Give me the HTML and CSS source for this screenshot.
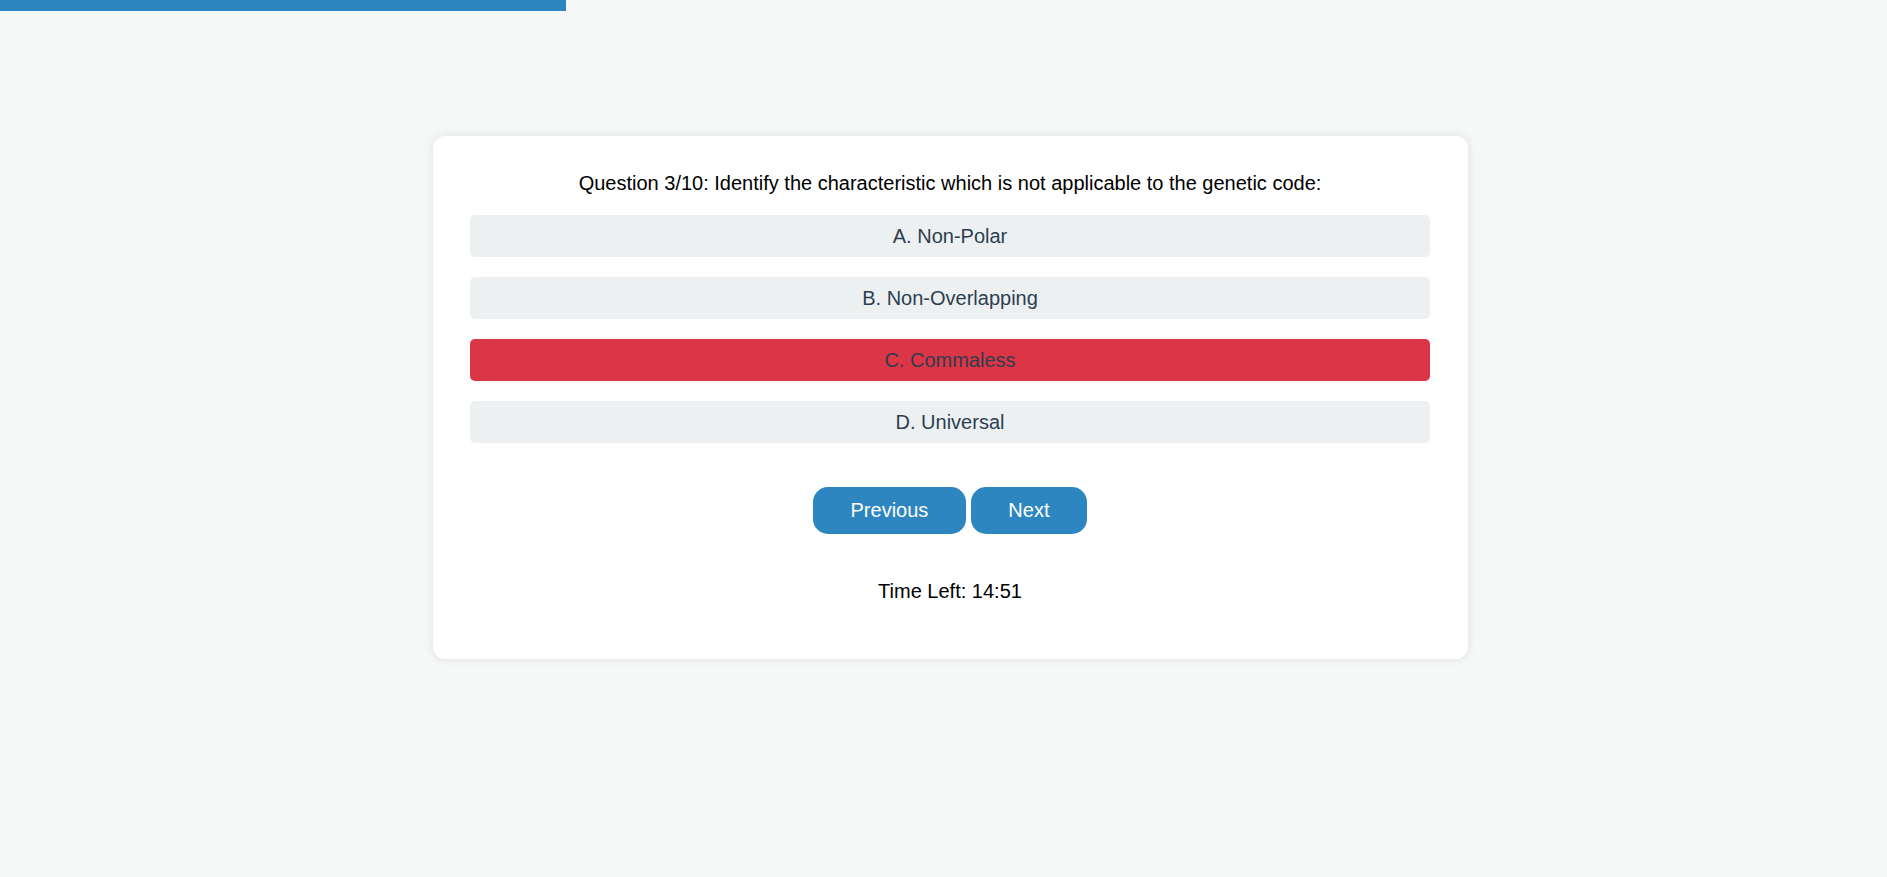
FILE: index.html
```html
<!DOCTYPE html>
<html lang="en">
<head>
<meta charset="utf-8">
<title>Quiz</title>
<link rel="stylesheet" href="styles.css">
</head>
<body>
  <div class="progress"><div class="progress-fill" style="width: 30%"></div></div>
  <main class="page">
    <section class="card">
      <h2 class="question">Question 3/10: Identify the characteristic which is not applicable to the genetic code:</h2>
      <div class="options">
        <button class="option">A. Non-Polar</button>
        <button class="option">B. Non-Overlapping</button>
        <button class="option option-wrong">C. Commaless</button>
        <button class="option">D. Universal</button>
      </div>
      <div class="nav">
        <button class="nav-btn">Previous</button>
        <button class="nav-btn">Next</button>
      </div>
      <p class="timer">Time Left: 14:51</p>
    </section>
  </main>
</body>
</html>
```

FILE: styles.css
```css
* {
  box-sizing: border-box;
}

html, body {
  margin: 0;
  padding: 0;
}

body {
  background: #f6f8f8;
  font-family: "Liberation Sans", Arial, sans-serif;
  min-height: 877px;
}

.progress {
  height: 11px;
  width: 100%;
}

.progress-fill {
  height: 100%;
  background: #2e86c1;
}

.page {
  display: flex;
  justify-content: center;
  padding-left: 14px;
  padding-top: 125px;
}

.card {
  width: 1035px;
  background: #ffffff;
  border-radius: 12px;
  box-shadow: 0 0 10px rgba(0, 0, 0, 0.1);
  padding: 36px 38px 56px 37px;
}

.question {
  margin: 0 0 20px 0;
  font-size: 20px;
  font-weight: normal;
  line-height: 23px;
  color: #000000;
  text-align: center;
}

.options {
  display: flex;
  flex-direction: column;
  gap: 20px;
}

.option {
  display: block;
  width: 100%;
  height: 42px;
  border: none;
  border-radius: 5px;
  background: #ecf0f1;
  color: #2c3e50;
  font-family: "Liberation Sans", Arial, sans-serif;
  font-size: 20px;
  line-height: 23px;
  padding: 0;
  text-align: center;
}

.option-wrong {
  background: #dc3545;
}

.nav {
  display: flex;
  justify-content: center;
  gap: 5px;
  margin-top: 44px;
}

.nav-btn {
  height: 47px;
  border: none;
  border-radius: 15px;
  background: #2e86c1;
  color: #ffffff;
  font-family: "Liberation Sans", Arial, sans-serif;
  font-size: 20px;
  line-height: 23px;
  padding: 0 37.5px;
}

.timer {
  margin: 46px 0 0 0;
  font-size: 20px;
  line-height: 23px;
  color: #000000;
  text-align: center;
}
```
